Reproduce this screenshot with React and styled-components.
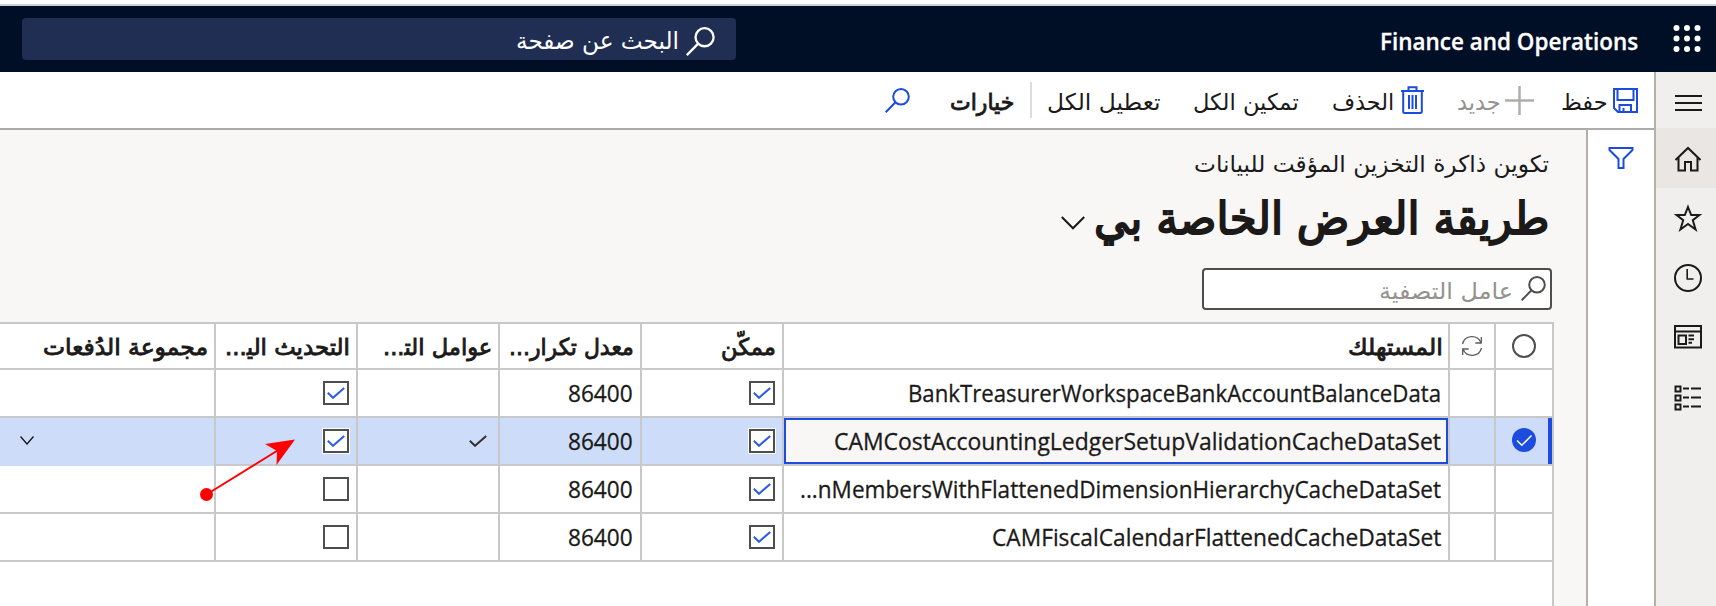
import React, { useLayoutEffect, useRef, useState } from "react";
import styled, { createGlobalStyle, css } from "styled-components";

const BLUE = "#1b4cdd";
const INK = "#1b1a19";
const LINE = "#c8c8c8";

const GlobalStyle = createGlobalStyle`
  * { box-sizing: border-box; }
  body { margin: 0; overflow: hidden; background: #fff; color: ${INK};
    font-family: "DejaVu Sans", sans-serif; }
`;

/* Text squeezed or stretched horizontally to the given width */
const FitBox = styled.span`
  display: block;
  flex: none;
  width: ${(p) => p.$width}px;
  height: ${(p) => p.$size * 1.5}px;
  line-height: ${(p) => p.$size * 1.5}px;
  font-size: ${(p) => p.$size}px;
  font-weight: ${(p) => p.$weight || 400};
  -webkit-text-stroke: ${(p) => p.$thick || 0}px currentColor;
  color: ${(p) => p.$color || "inherit"};
  font-family: ${(p) => (p.$latin ? '"Open Sans", sans-serif' : '"DejaVu Sans", sans-serif')};
  margin-top: ${(p) => p.$top || 0}px;
  direction: ${(p) => (p.$latin ? "ltr" : "rtl")};
`;
const FitInner = styled.span`
  display: inline-block;
  white-space: nowrap;
  transform-origin: ${(p) => (p.$latin ? "left" : "right")} center;
`;
function FitText({ width, size = 23, weight, thick, color, latin, top, children }) {
  const ref = useRef(null);
  const [scale, setScale] = useState(1);
  useLayoutEffect(() => {
    setScale(width / ref.current.offsetWidth);
  }, [width, children]);
  return (
    <FitBox $width={width} $size={size} $weight={weight} $thick={thick} $color={color} $latin={latin} $top={top}>
      <FitInner ref={ref} $latin={latin} style={{ transform: `scaleX(${scale})` }}>
        {children}
      </FitInner>
    </FitBox>
  );
}

const Page = styled.div`
  position: relative;
  direction: rtl;
  width: 1716px;
  height: 606px;
  overflow: hidden;
  display: flex;
  flex-direction: column;
`;
const TopBar = styled.header`
  flex: none;
  height: 68px;
  margin-top: 4px;
  border-top: 2px solid #cbd2d6;
  background: #000f26;
  color: #fff;
  display: flex;
  align-items: center;
  padding: 0 14px 0 22px;
`;
const Brand = styled.div`
  margin-right: 34px;
  flex: 1;
  padding-top: 6px;
`;
const PageSearch = styled.div`
  width: 714px;
  height: 42px;
  border-radius: 4px;
  background: #1f2e52;
  display: flex;
  align-items: center;
  gap: 7px;
  padding-right: 21px;
`;
const Body = styled.div`
  flex: 1;
  display: flex;
  min-height: 0;
`;
const Rail = styled.nav`
  width: 62px;
  border-left: 2px solid #b3b0ab;
  background: #f0efee;
  display: flex;
  flex-direction: column;
`;
const RailItem = styled.div`
  height: ${(p) => p.$height || 60}px;
  background: ${(p) => (p.$active ? "#e9e6e3" : "transparent")};
  display: flex;
  align-items: center;
  justify-content: center;
  padding-left: 4px;
`;
const Main = styled.main`
  flex: 1;
  display: flex;
  flex-direction: column;
  min-width: 0;
`;
const Toolbar = styled.div`
  height: 58px;
  border-bottom: 2px solid #aeaca8;
  display: flex;
  align-items: center;
  padding-right: 16px;
`;
const Command = styled.div`
  display: flex;
  align-items: center;
  gap: ${(p) => p.$gap || 0}px;
  margin-left: ${(p) => p.$after || 0}px;
`;
const Divider = styled.div`
  width: 2px;
  height: 36px;
  background: #dcdcdc;
  margin-left: 16px;
`;
const Workspace = styled.div`
  flex: 1;
  display: flex;
  min-height: 0;
`;
const FilterPane = styled.aside`
  width: 68px;
  border-left: 2px solid #b3b0ab;
  background: #fff;
  padding: 16px 20px 0 0;
`;
const Content = styled.section`
  flex: 1;
  background: #f8f7f6;
  display: flex;
  flex-direction: column;
`;
const Heading = styled.div`
  height: 192px;
  padding: 17px 37px 0 0;
`;
const TitleRow = styled.div`
  display: flex;
  align-items: center;
  gap: 9px;
  height: 66px;
`;
const FilterInput = styled.div`
  width: 350px;
  height: 42px;
  margin: 20px -3px 0 0;
  border: 2px solid #504e4c;
  border-radius: 4px;
  background: #fff;
  display: flex;
  align-items: center;
  gap: 8px;
  padding-right: 4px;
`;
const Grid = styled.div`
  flex: 1;
  margin-right: 32px;
  border-top: 2px solid ${LINE};
  border-right: 2px solid ${LINE};
  background: #fff;
`;
const Row = styled.div`
  display: grid;
  grid-template-columns: 58px 46px 666px 142px 142px 142px 142px 214px;
  height: ${(p) => (p.$header ? 46 : 48)}px;
  background: ${(p) => (p.$selected ? "#cdddf9" : "#fff")};
`;
const Cell = styled.div`
  display: flex;
  align-items: center;
  justify-content: ${(p) => (p.$center ? "center" : "flex-start")};
  padding-right: ${(p) => p.$pad ?? 0}px;
  border-left: 2px solid ${LINE};
  border-bottom: 2px solid ${LINE};
  &:last-child { border-left: 0; }
  ${(p) => p.$bar && css`box-shadow: inset -4px 0 ${BLUE};`}
  ${(p) => p.$open && css`border-bottom-color: #cdddf9;`}
  ${(p) => p.$focused && css`
    background: #f8f7f5;
    box-shadow: inset 0 0 0 2px ${BLUE};
  `}
`;
const Check = styled.div`
  width: 26px;
  height: 24px;
  border: 2px solid #504e4c;
  background: #fff;
  display: flex;
  align-items: center;
  justify-content: center;
  ${(p) => p.$halo && css`box-shadow: 0 0 0 1px #fff;`}
`;
const Arrow = styled.svg`
  position: absolute;
  left: 198px;
  top: 436px;
`;
const Svg = styled.svg`
  display: block;
  flex: none;
  fill: none;
  stroke: ${(p) => p.$color || INK};
  stroke-width: ${(p) => p.$stroke || 2};
  margin-top: ${(p) => p.$top || 0}px;
`;

const Search = ({ size = 25, color, stroke, top }) => (
  <Svg width={size} height={size} viewBox="0 0 25 25" $color={color} $stroke={stroke} $top={top}>
    <circle cx="16" cy="8.8" r="7.8" />
    <path d="M10.5 14.3 0.7 24.2" />
  </Svg>
);
const Tick = ({ color, top }) => (
  <Svg width="18" height="12" viewBox="0 0 18 12" $color={color} $top={top}>
    <path d="M.8 5.8 6 10.8 17.2.9" />
  </Svg>
);
const CheckBox = ({ on, halo }) => (
  <Check $halo={halo}>{on && <Tick color="#2b5ce4" top={-1} />}</Check>
);

const headers = [
  { text: "المستهلك", width: 95, pad: 5 },
  { text: "ممكّن", width: 55, pad: 6 },
  { text: "معدل تكرار...", width: 125, pad: 6 },
  { text: "عوامل الت‍...", width: 109, pad: 6 },
  { text: "التحديث الي‍...", width: 125, pad: 6 },
  { text: "مجموعة الدُفعات", width: 165, pad: 6 },
];
const rows = [
  { name: "BankTreasurerWorkspaceBankAccountBalanceData", width: 533, auto: true },
  { name: "CAMCostAccountingLedgerSetupValidationCacheDataSet", width: 607, auto: true, selected: true },
  { name: "...nMembersWithFlattenedDimensionHierarchyCacheDataSet", width: 641 },
  { name: "CAMFiscalCalendarFlattenedCacheDataSet", width: 449 },
];

export default function App() {
  return (
    <Page>
      <GlobalStyle />
      <TopBar>
        <Svg width="30" height="30" viewBox="0 0 30 30" $color="none">
          <g fill="#fff">
            {[4, 14.5, 25].map((y) => [4.5, 15, 25.5].map((x) => <circle key={`${x}-${y}`} cx={x} cy={y} r="3" />))}
          </g>
        </Svg>
        <Brand>
          <FitText latin width={258} size={23.5} weight={600} thick={0.3}>Finance and Operations</FitText>
        </Brand>
        <PageSearch>
          <Search size={29} color="#fff" top={4} />
          <FitText width={163} size={24} top={4}>البحث عن صفحة</FitText>
        </PageSearch>
      </TopBar>
      <Body>
        <Rail>
          <RailItem $height={56}>
            <Svg width="28" height="18" viewBox="-1 0 28 18" $top={6}><path d="M0 2h28M0 9h28M0 16h28" /></Svg>
          </RailItem>
          <RailItem $active>
            <Svg width="28" height="26" viewBox="0 0 28 26" $top={1}>
              <path d="M1.5 14 14 2l12.500 12M4.500 11.500V24.500H11V16h6v8.500h6.500V11.500" />
            </Svg>
          </RailItem>
          <RailItem>
            <Svg width="28" height="28" viewBox="0 0 28 28">
              <path d="M14 3 17.200 11H25.500L18.800 16.200 21.600 25.500 14 20 6.400 25.500 9.200 16.200 2.500 11H10.800Z" />
            </Svg>
          </RailItem>
          <RailItem>
            <Svg width="28" height="28" viewBox="0 0 28 28">
              <circle cx="14" cy="14" r="13" /><path d="M13.200 5v10h6.300" strokeWidth="1.600" />
            </Svg>
          </RailItem>
          <RailItem>
            <Svg width="28" height="24" viewBox="0 0 28 24" $top={-2}>
              <path d="M1 1h26v21.500H1ZM1 6.500h26M4.500 10.500h7.500v8.500H4.500ZM14.500 10.500h5.500M14.500 14.200h5.500M14.500 17.800h3.500" />
            </Svg>
          </RailItem>
          <RailItem>
            <Svg width="28" height="26" viewBox="0 0 28 26">
              <path d="M1.500 1.500h5v5h-5ZM1.500 10.500h5v5h-5ZM1.500 19.500h5v5h-5ZM9 3.500h6M17 3.500h10M9 12.500h6M17 12.500h10M9 21.500h6M17 21.500h10" />
            </Svg>
          </RailItem>
        </Rail>
        <Main>
          <Toolbar>
            <Command $gap={5} $after={27}>
              <Svg width="25" height="25" viewBox="0 0 25 25" $color={BLUE}>
                <path d="M1 1h23v23H5L1 20ZM4.500 1v11h16V1M6.500 24v-7h11.500v7M10.500 24v-4" />
              </Svg>
              <FitText width={47} top={5}>حفظ</FitText>
            </Command>
            <Command $gap={4} $after={33}>
              <Svg width="29" height="29" viewBox="0 0 29 29" $color="#b0aea9" $stroke={2.5}>
                <path d="M14.500 0v29M0 14.500h29" />
              </Svg>
              <FitText width={44} color="#94928e" top={5}>جديد</FitText>
            </Command>
            <Command $gap={7} $after={33}>
              <Svg width="23" height="28" viewBox="0 0 23 28" $color={BLUE}>
                <path d="M0 5h23M7.500 5V1.200h8V5M2.200 5v20.500q0 1.500 1.500 1.500h15.600q1.500 0 1.500-1.500V5M8 9v14M11.500 9v14M15 9v14" />
              </Svg>
              <FitText width={62} top={5}>الحذف</FitText>
            </Command>
            <Command $after={32}><FitText width={106} top={5}>تمكين الكل</FitText></Command>
            <Command $after={15}><FitText width={114} top={5}>تعطيل الكل</FitText></Command>
            <Divider />
            <Command $after={40}><FitText width={64} thick={0.9} top={5}>خيارات</FitText></Command>
            <Search color={BLUE} />
          </Toolbar>
          <Workspace>
            <FilterPane>
              <Svg width="26" height="24" viewBox="0 0 26 24" $color={BLUE}>
                <path d="M1.500 2H24.500V4L15.500 13V22H10.500V13L1.500 4Z" />
              </Svg>
            </FilterPane>
            <Content>
              <Heading>
                <FitText width={355}>تكوين ذاكرة التخزين المؤقت للبيانات</FitText>
                <TitleRow>
                  <FitText width={455} size={45} thick={1.9} top={8}>طريقة العرض الخاصة بي</FitText>
                  <Svg width="24" height="14" viewBox="0 0 24 14" $top={16}><path d="M.8 1 12 12.300 23.200 1" /></Svg>
                </TitleRow>
                <FilterInput>
                  <Search color="#504e4c" />
                  <FitText width={134} color="#94928e" top={5}>عامل التصفية</FitText>
                </FilterInput>
              </Heading>
              <Grid>
                <Row $header>
                  <Cell $center>
                    <Svg width="24" height="24" viewBox="0 0 24 24" $color="#504e4c"><circle cx="12" cy="12" r="11" /></Svg>
                  </Cell>
                  <Cell $center>
                    <Svg width="22" height="22" viewBox="0 0 22 22" $color="#605e5c" $stroke={1.3}>
                      <path d="M1.500 9A9.700 9.700 0 0 1 19.800 7.500M20.300 2v6h-6M20.500 13A9.700 9.700 0 0 1 2.200 14.500M1.700 20v-6h6" />
                    </Svg>
                  </Cell>
                  {headers.map((h) => (
                    <Cell key={h.text} $pad={h.pad}>
                      <FitText width={h.width} thick={0.9} top={3}>{h.text}</FitText>
                    </Cell>
                  ))}
                </Row>
                {rows.map((r) => (
                  <Row key={r.name} $selected={r.selected}>
                    <Cell $center $bar={r.selected}>
                      {r.selected && (
                        <Svg width="24" height="24" viewBox="0 0 24 24" $color="#fff" $stroke={1.5} $top={-2}>
                          <circle cx="12" cy="12" r="12" fill={BLUE} stroke="none" />
                          <path d="M5 12.500 9.800 17.300 19.500 7.500" />
                        </Svg>
                      )}
                    </Cell>
                    <Cell />
                    <Cell $pad={7} $focused={r.selected}>
                      <FitText latin width={r.width} size={24} thick={0.3}>{r.name}</FitText>
                    </Cell>
                    <Cell $pad={7}><CheckBox on halo={r.selected} /></Cell>
                    <Cell $pad={7}><FitText latin width={65} size={24} thick={0.3}>86400</FitText></Cell>
                    <Cell $pad={11}>{r.selected && <Tick color="#323130" top={-1} />}</Cell>
                    <Cell $pad={7}><CheckBox on={r.auto} halo={r.selected} /></Cell>
                    <Cell $pad={180} $open={r.selected}>
                      {r.selected && (
                        <Svg width="14" height="9" viewBox="0 0 14 9" $stroke={1.4} $top={-2}><path d="M.5.500 7 8 13.500.500" /></Svg>
                      )}
                    </Cell>
                  </Row>
                ))}
              </Grid>
            </Content>
          </Workspace>
        </Main>
      </Body>
      <Arrow width="100" height="70" viewBox="198 436 100 70">
        <path d="M206.500 494.500 280 449" stroke="#f00" strokeWidth="2" />
        <circle cx="206.500" cy="494.500" r="6.500" fill="#f00" />
        <path d="M295 439.500 265 444 277 451 276.500 465Z" fill="#f00" />
      </Arrow>
    </Page>
  );
}
